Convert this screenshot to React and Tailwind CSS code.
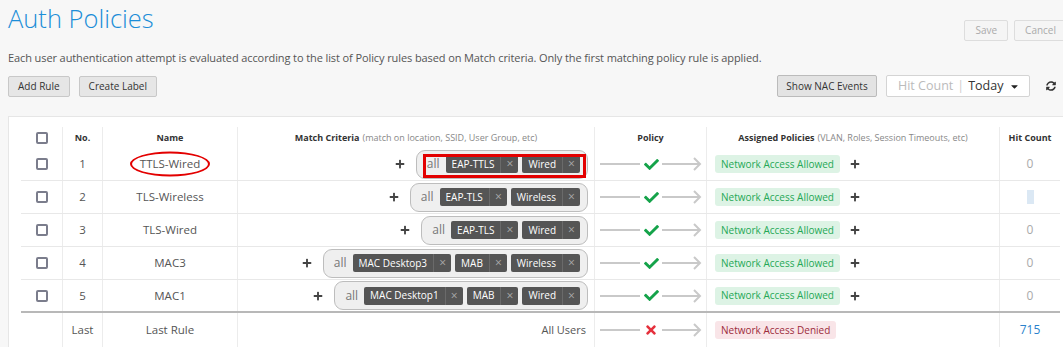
import { FaPlus, FaCheck, FaTimes, FaSyncAlt, FaCaretDown } from 'react-icons/fa';

const rules = [
  { no: 1, name: 'TTLS-Wired', tags: ['EAP-TTLS', 'Wired'], marked: true, hits: '0' },
  { no: 2, name: 'TLS-Wireless', tags: ['EAP-TLS', 'Wireless'], hits: null },
  { no: 3, name: 'TLS-Wired', tags: ['EAP-TLS', 'Wired'], hits: '0' },
  { no: 4, name: 'MAC3', tags: ['MAC Desktop3', 'MAB', 'Wireless'], hits: '0' },
  { no: 5, name: 'MAC1', tags: ['MAC Desktop1', 'MAB', 'Wired'], hits: '0' },
];

const cols = 'grid grid-cols-[41px_40px_135px_357px_112px_293px_61px]';
const cell = 'border-l border-[#ececec] h-full flex items-center';

function Checkbox() {
  return <span className="block w-[12px] h-[12px] border-2 border-[#7b7d8c] rounded-[2px] bg-white" />;
}

function Tag({ label }) {
  return (
    <span className="flex items-center h-[18px] bg-[#555] rounded-[2px] text-white text-[10px]">
      <span className="px-[6px]">{label}</span>
      <span className="flex items-center justify-center w-[18px] h-full border-l border-[#6a6a6a] text-[#aaa] text-[12px]">×</span>
    </span>
  );
}

function Flow({ ok }) {
  return (
    <div className="flex items-center pl-[5px]">
      <span className="block w-[40px] h-[2px] bg-[#c9c9c9]" />
      <span className="w-[22px] flex justify-center">
        {ok ? <FaCheck size={15} color="#15a34a" /> : <FaTimes size={14} color="#e5303c" />}
      </span>
      <svg width="40" height="14" viewBox="0 0 40 14" fill="none" stroke="#c9c9c9" strokeWidth="2">
        <line x1="0" y1="7" x2="38" y2="7" />
        <polyline points="32,1 38,7 32,13" />
      </svg>
    </div>
  );
}

export default function App() {
  return (
    <div className="h-[347px] w-full overflow-hidden bg-[#f7f7f7] text-[#555]" style={{ fontFamily: '"Open Sans", "Noto Sans", sans-serif' }}>
      {/* Title + Save/Cancel */}
      <div className="flex justify-between items-start h-[44px]">
        <h1 className="pl-2 text-[25.5px] leading-[36px] font-light text-[#1c8ed8]">Auth Policies</h1>
        <div className="flex gap-[6px] mt-[20px] mr-[-4px]">
          <button className="h-[21px] px-[10px] border border-[#ddd] bg-[#f5f5f5] rounded-[2px] text-[10px] text-[#aaa]">Save</button>
          <button className="h-[21px] px-[10px] border border-[#ddd] bg-[#f5f5f5] rounded-[2px] text-[10px] text-[#aaa]">Cancel</button>
        </div>
      </div>

      <p className="pl-2 text-[11px] leading-[16px] mt-[6px] tracking-[-0.1px]">
        Each user authentication attempt is evaluated according to the list of Policy rules based on Match criteria. Only the first matching policy rule is applied.
      </p>

      {/* Toolbar */}
      <div className="flex justify-between items-center mt-[9px] pl-2 pr-[7px]">
        <div className="flex gap-[9px]">
          <button className="h-[21px] px-[9px] border border-[#c8c8c8] bg-[#e6e6e6] rounded-[2px] text-[10px] text-[#333]">Add Rule</button>
          <button className="h-[21px] px-[9px] border border-[#c8c8c8] bg-[#e6e6e6] rounded-[2px] text-[10px] text-[#333]">Create Label</button>
        </div>
        <div className="flex items-center">
          <button className="h-[22px] w-[100px] border border-[#bbb] bg-[#e3e3e3] rounded-[2px] text-[10px] text-[#333]">Show NAC Events</button>
          <div className="ml-[9px] w-[144px] h-[22px] border border-[#d4d4d4] bg-white rounded-[2px] flex items-center pl-[11px] pr-[9px] text-[12.5px] whitespace-nowrap">
            <span className="text-[#bbb]">Hit Count</span>
            <span className="text-[#ccc] mx-[4px]">|</span>
            <span className="text-[#333]">Today</span>
            <FaCaretDown className="ml-auto" size={11} color="#222" />
          </div>
          <FaSyncAlt className="ml-[16px]" size={10} color="#333" />
        </div>
      </div>

      {/* Table panel */}
      <div className="ml-2 mt-[19px] w-[1070px] h-[300px] bg-white border-l border-t border-[#e6e6e6] pt-[10px] pl-[12px]">
        <div className="w-[1039px]">
          <div className={`${cols} h-[21px] text-[9px] font-bold text-[#333]`}>
            <div className="flex items-center justify-center"><Checkbox /></div>
            <div className={`${cell} justify-center`}>No.</div>
            <div className={`${cell} justify-center`}>Name</div>
            <div className={`${cell} justify-center`}>
              Match Criteria<span className="font-normal text-[#888] ml-[3px]">(match on location, SSID, User Group, etc)</span>
            </div>
            <div className={`${cell} justify-center`}>Policy</div>
            <div className={`${cell} justify-center`}>
              Assigned Policies<span className="font-normal text-[#888] ml-[3px]">(VLAN, Roles, Session Timeouts, etc)</span>
            </div>
            <div className={`${cell} justify-center`}>Hit Count</div>
          </div>

          {rules.map((r, i) => (
            <div
              key={r.no}
              className={`${cols} h-[33px] text-[11.5px] ${i === rules.length - 1 ? 'border-b-2 border-[#b8b8b8]' : 'border-b border-[#e8e8e8]'}`}
            >
              <div className="flex items-center justify-center"><Checkbox /></div>
              <div className={`${cell} justify-center`}>{r.no}</div>
              <div className={`${cell} justify-center`}>
                <span className="relative">
                  {r.name}
                  {r.marked && (
                    <span className="absolute left-[-10px] right-[-10px] top-1/2 -translate-y-1/2 h-[25px] rounded-[50%] border-2 border-[#e30000]" />
                  )}
                </span>
              </div>
              <div className={`${cell} justify-end pr-[6px]`}>
                <FaPlus size={10} color="#444" />
                <div className="relative ml-[11px] h-[29px] flex items-center gap-[4px] pl-[10px] pr-[7px] bg-[#efefef] border border-[#bdbdbd] rounded-[9px]">
                  <span className="text-[12px] text-[#777] mr-[2px]">all</span>
                  {r.tags.map((t) => <Tag key={t} label={t} />)}
                  {r.marked && (
                    <span className="absolute left-[6px] right-[1px] top-[3px] bottom-[0px] border-[3px] border-[#e30000]" />
                  )}
                </div>
              </div>
              <div className={cell}><Flow ok /></div>
              <div className={`${cell} pl-[8px]`}>
                <span className="h-[18px] px-[6px] flex items-center rounded-[3px] bg-[#ddf3e5] text-[#25a856] text-[10px]">Network Access Allowed</span>
                <FaPlus className="ml-[10px]" size={10} color="#444" />
              </div>
              <div className={`${cell} justify-center text-[12px]`}>
                {r.hits ? <span className="text-[#aaa]">{r.hits}</span> : <span className="block w-[7px] h-[14px] bg-[#dbe8f4]" />}
              </div>
            </div>
          ))}

          <div className={`${cols} h-[34px] text-[11.5px]`}>
            <div />
            <div className={`${cell} justify-center`}>Last</div>
            <div className={`${cell} justify-center`}>Last Rule</div>
            <div className={`${cell} justify-end pr-[8px] text-[11px]`}>All Users</div>
            <div className={cell}><Flow ok={false} /></div>
            <div className={`${cell} pl-[8px]`}>
              <span className="h-[18px] px-[6px] flex items-center rounded-[3px] bg-[#f9e5e8] text-[#9c2c3c] text-[10px]">Network Access Denied</span>
            </div>
            <div className={`${cell} justify-center text-[12px]`}>
              <span className="text-[#2b82cc]">715</span>
            </div>
          </div>
        </div>
      </div>
    </div>
  );
}
